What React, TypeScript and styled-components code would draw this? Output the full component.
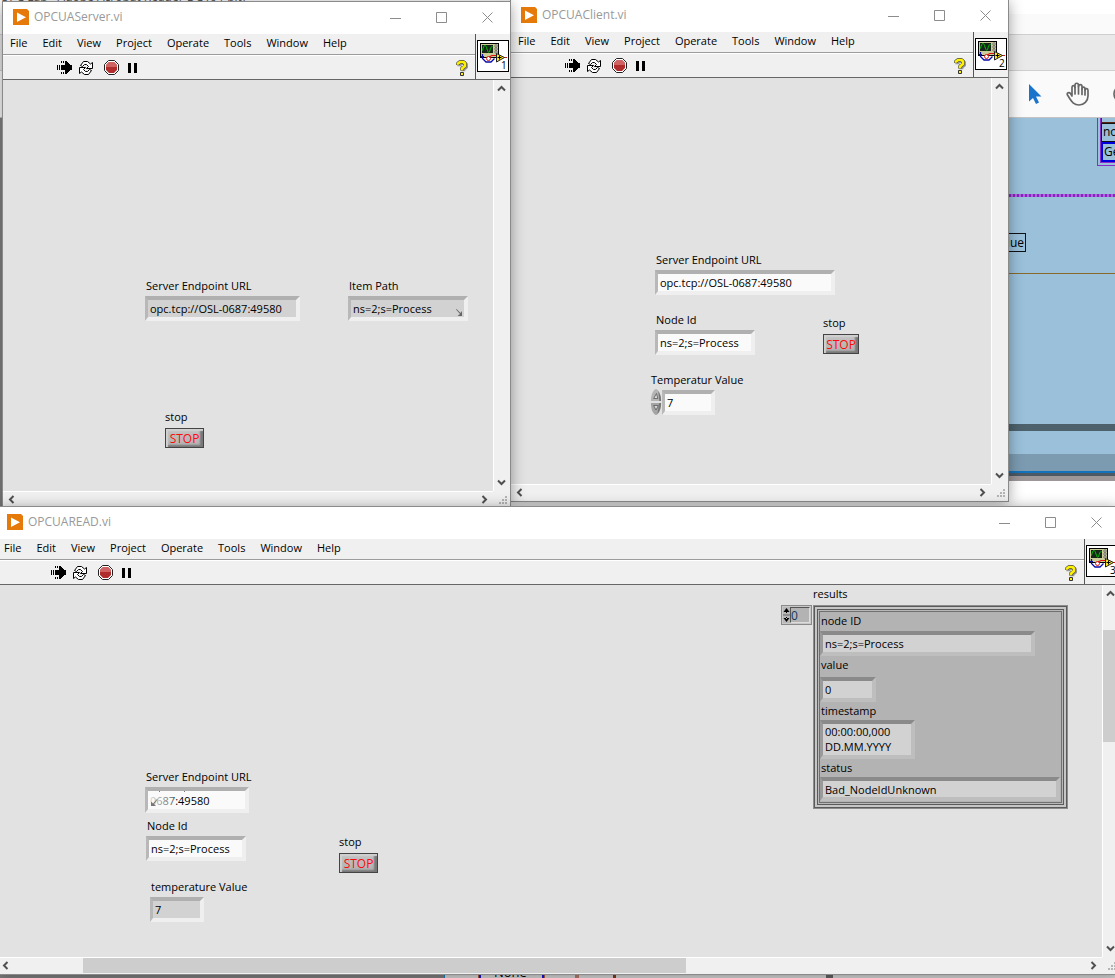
import React from "react";
import styled, { createGlobalStyle } from "styled-components";

const GlobalStyle = createGlobalStyle`
  *, *::before, *::after { box-sizing: border-box; }
  body { margin: 0; background: #808080; }
  body, button, input, textarea {
    font-family: "Open Sans", "Noto Sans", sans-serif;
    font-size: 11px;
    color: #000;
  }
  button { margin: 0; padding: 0; border: 0; background: none; }
  svg { display: block; flex: none; }
`;

/* ---------- desktop and the applications behind ---------- */

const Desktop = styled.main`
  position: relative;
  display: flex;
  flex-direction: column;
  min-height: 100vh;
  overflow: hidden;
`;

const Strip = styled.div<{ $height: number; $color: string; $line?: string }>`
  flex: none;
  height: ${(p) => p.$height}px;
  background: ${(p) => p.$color};
  border-bottom: ${(p) => (p.$line ? `1px solid ${p.$line}` : "0")};
`;

const ReaderTitle = styled(Strip)`
  line-height: 14px;
  color: #555;
  font-size: 12px;
  white-space: nowrap;
  & > span { display: block; margin-top: -10px; }
`;

const ReaderTools = styled(Strip)`
  display: flex;
  align-items: center;
  gap: 24px;
  padding-left: 1028px;
`;

const ReaderBody = styled.div`
  flex: 1;
  display: flex;
`;

const ReaderMargin = styled.div`
  flex: 0 0 444px;
  background: #828282;
`;

const Page = styled.div`
  flex: 1;
  min-width: 0;
  display: flex;
  flex-direction: column;
  background: #fff;
  border-left: 1px solid #1c86c0;
`;

const Diagram = styled.div`
  position: relative;
  height: 306px;
  overflow: hidden;
  background: #9ac0da;
`;

const Wire = styled.div<{ $top: number; $color: string; $height: number }>`
  position: absolute;
  left: 0;
  right: 0;
  top: ${(p) => p.$top}px;
  height: ${(p) => p.$height}px;
  background: ${(p) => p.$color};
`;

const ValueTag = styled.div`
  position: absolute;
  left: 529px;
  top: 115px;
  width: 52px;
  height: 19px;
  border: 1px solid #111;
  font-size: 12px;
  line-height: 17px;
  text-align: right;
  padding-right: 1px;
`;

const NodeBox = styled.div`
  position: absolute;
  left: 652px;
  top: -12px;
  width: 90px;
  height: 60px;
  border: 4px double #8a2cc8;
  background: #9ac0da;
`;

const NodeRow = styled.div<{ $edge: string; $height: number; $thick?: boolean }>`
  height: ${(p) => p.$height}px;
  border: ${(p) => (p.$thick ? 2 : 1)}px solid ${(p) => p.$edge};
  padding-left: 1px;
  font-size: 12px;
  line-height: ${(p) => p.$height - 4}px;
`;

const PageBottom = styled.div`
  flex: 1;
  display: flex;
  align-items: flex-end;
  padding-left: 34px;
  background: #dcdcdc;
`;

const EnumBox = styled.div`
  width: 65px;
  height: 15px;
  border: 2px solid #1414e0;
  border-width: 0 2px;
  outline: 1px solid #b0603c;
  padding-left: 13px;
  font-size: 13px;
  line-height: 19px;
`;

const Post = styled.div<{ $gap: number; $width: number; $color: string }>`
  width: ${(p) => p.$width}px;
  height: 8px;
  margin-left: ${(p) => p.$gap}px;
  background: ${(p) => p.$color};
`;

/* ---------- window frame ---------- */

const Frame = styled.section<{ $area: string }>`
  position: absolute;
  ${(p) => p.$area}
  display: flex;
  flex-direction: column;
  outline: 1px solid #8a8a8a;
  background: #f0f0f0;
  box-shadow: 0 2px 14px rgba(0, 0, 0, 0.42);
`;

const TitleBar = styled.header`
  flex: none;
  display: flex;
  align-items: center;
  height: 32px;
  padding: 0 0 2px 10px;
  background: #fff;
`;

const Title = styled.h1`
  flex: 1;
  margin: 0 0 0 5px;
  font-size: 12px;
  font-weight: 400;
  line-height: 16px;
  color: #999;
`;

const CaptionButton = styled.button`
  display: flex;
  align-items: center;
  justify-content: center;
  width: 46px;
  height: 30px;
`;

const Head = styled.div`
  flex: none;
  display: flex;
  height: 46px;
  border-bottom: 1px solid #666;
`;

const Bars = styled.div`
  flex: 1;
  min-width: 0;
`;

const MenuBar = styled.nav`
  display: flex;
  gap: 1px;
  height: 21px;
  border-bottom: 1px solid #9c9c9c;
`;

const MenuButton = styled.button`
  padding: 0 7px;
  line-height: 18px;
  height: 18px;
`;

const ToolBar = styled.div`
  display: flex;
  align-items: center;
  height: 24px;
  padding: 0 7px 0 54px;
  border-top: 1px solid #fff;
`;

const ToolButton = styled.button<{ $gap?: number }>`
  margin-left: ${(p) => p.$gap ?? 0}px;
`;

const HelpButton = styled.button`
  margin-left: auto;
`;

const IconPane = styled.div`
  flex: 0 0 35px;
  border-left: 1px solid #555;
  padding: 6px 1px 0;
`;

const Workspace = styled.div`
  flex: 1;
  min-height: 0;
  display: grid;
  grid-template-columns: minmax(0, 1fr) 17px;
  grid-template-rows: minmax(0, 1fr) 17px;
`;

const Canvas = styled.div`
  position: relative;
  overflow: hidden;
  background: #e2e2e2;
`;

const ScrollButton = styled.button`
  display: flex;
  align-items: center;
  justify-content: center;
`;

const ScrollBar = styled.div<{ $vertical?: boolean }>`
  position: relative;
  display: flex;
  flex-direction: ${(p) => (p.$vertical ? "column" : "row")};
  justify-content: space-between;
  background: #f0f0f0;
  border: 0 solid #fff;
  border-width: ${(p) => (p.$vertical ? "0 0 0 1px" : "1px 0 0 0")};
  ${ScrollButton} {
    width: ${(p) => (p.$vertical ? 15 : 17)}px;
    height: ${(p) => (p.$vertical ? 17 : 15)}px;
  }
`;

const HThumb = styled.div`
  position: absolute;
  left: 86px;
  top: 0;
  bottom: 1px;
  width: 603px;
  background: #cdcdcd;
`;

const VThumb = styled.div`
  position: absolute;
  left: 0;
  right: 0;
  top: 45px;
  height: 30%;
  background: #cdcdcd;
`;

const Grip = styled.div`
  display: flex;
  align-items: flex-end;
  justify-content: flex-end;
  padding: 0 3px 3px 0;
`;

/* ---------- front panel controls ---------- */

const Control = styled.div<{ $x: number; $y: number }>`
  position: absolute;
  left: ${(p) => p.$x}px;
  top: ${(p) => p.$y}px;
`;

const Caption = styled.label<{ $indent?: number }>`
  display: block;
  padding-left: ${(p) => p.$indent ?? 1}px;
  line-height: 18px;
  white-space: nowrap;
`;

type BoxProps = { $width: number; $height?: number; $fill?: string; $dark?: boolean; $gap?: number };

const bevel = (p: BoxProps) => `
  display: block;
  width: ${p.$width}px;
  height: ${p.$height ?? 25}px;
  margin: ${p.$gap ?? 1}px 0 0;
  padding: 0 2px;
  border: 4px solid;
  border-width: 4px 4px 4px 3px;
  border-color: ${p.$dark ? "#8a8a8a #bebebe #bebebe #9a9a9a" : "#b0b0b0 #efefef #efefef #b8b8b8"};
  border-radius: 0;
  background: ${p.$fill ?? "#d2d2d2"};
  outline: none;
`;

const TextBox = styled.input<BoxProps>`
  ${bevel}
`;

const StampBox = styled.textarea<BoxProps>`
  ${bevel}
  line-height: 15px;
  resize: none;
  overflow: hidden;
`;

const Overlay = styled.div`
  position: relative;
  & > svg { position: absolute; }
`;

const FadedStart = styled.div`
  position: absolute;
  left: 5px;
  top: 4px;
  width: 24px;
  height: 17px;
  background: linear-gradient(90deg, rgba(250, 250, 250, 0.85), rgba(250, 250, 250, 0.35));
`;

const ItemArrow = styled.svg`
  right: 5px;
  bottom: 5px;
`;

const PathArrow = styled.svg`
  left: 6px;
  top: 4px;
`;

const Row = styled.div`
  display: flex;
  align-items: flex-start;
`;

const StopButton = styled.button<{ $width: number }>`
  display: block;
  width: ${(p) => p.$width}px;
  height: 20px;
  margin-top: 2px;
  border: 1px solid #444;
  background: linear-gradient(#c4c4c4, #b0b0b0);
  box-shadow: inset 2px 2px 1px #d0d0d0, inset -3px -2px 2px #777;
  color: #ff0a0a;
  line-height: 18px;
  font-size: 12px;
  padding-top: 1px;
`;

const Results = styled(Control)`
  display: grid;
  grid-template-columns: 32px 255px;
`;

const IndexControl = styled.div`
  display: flex;
  width: 31px;
  height: 20px;
  margin-top: 2px;
  border: 1px solid #8a8a8a;
  padding: 1px;
  background: #c8c8c8;
`;

const IndexInput = styled.input`
  flex: 1;
  min-width: 0;
  padding: 0;
  border: 1px solid #666;
  border-color: #555 #ddd #ddd #555;
  background: #b3b3b3;
  font-size: 12px;
  color: #123a60;
`;

const Cluster = styled.fieldset`
  min-width: 0;
  margin: 2px 0 0;
  height: 204px;
  padding: 7px;
  border: 0;
  background: #b3b3b3;
  box-shadow:
    inset 0 0 0 1px #8c8c8c,
    inset 0 0 0 2px #5a5a5a,
    inset 0 0 0 4px #c6c6c6,
    inset 0 0 0 5px #5a5a5a,
    inset 0 0 0 6px #b8b8b8,
    inset 0 0 0 7px #707070;
`;

const Legend = styled.div`
  grid-column: 2;
  line-height: 18px;
`;

/* ---------- drawings ---------- */

const LabviewLogo = () => (
  <svg width="16" height="16" viewBox="0 0 16 16">
    <path d="M0 0H14L16 2V16H0Z" fill="#e57a0a" />
    <path d="M4 3.500L13 8.200L4 13Z" fill="#fff" />
  </svg>
);

const RunIcon = () => (
  <svg width="15" height="15" viewBox="0 0 15 15" shapeRendering="crispEdges">
    <path d="M0 5h1v5H0zM2 5h1v5H2zM4 5h11v5H4zM4 1h1v2H4zM6 1h1v2H6zM4 12h1v2H4zM6 12h1v2H6z" />
    <path d="M8 1h1l6 6v1l-6 6H8z" />
  </svg>
);

const LoopIcon = () => (
  <svg width="16" height="14" viewBox="0 0 16 14" fill="#fff" stroke="#000" strokeWidth="1">
    <path d="M2.500 4.500L5.500 .5H9.500L12.500 3L14.500 1.500V7.500H8.500L10.500 5.500L8.500 3.500H6.500L4.500 5.500Z" />
    <path d="M13.500 9.500L10.500 13.500H6.500L3.500 11L1.500 12.500V6.500H7.500L5.500 8.500L7.500 10.500H9.500L11.500 8.500Z" />
  </svg>
);

const AbortIcon = () => (
  <svg width="15" height="15" viewBox="0 0 15 15">
    <path d="M4.500 .5H10.500L14.500 4.500V10.500L10.500 14.500H4.500L.5 10.500V4.500Z" fill="#fff" stroke="#222" />
    <path d="M5 2H10L13 5V10L10 13H5L2 10V5Z" fill="#b12c2c" />
    <path d="M5 2H10L13 5V7H2V5Z" fill="#cf6262" />
  </svg>
);

const PauseIcon = () => (
  <svg width="10" height="10" viewBox="0 0 10 10" shapeRendering="crispEdges">
    <path d="M0 0h3v10H0zM6 0h3v10H6z" />
  </svg>
);

const HelpIcon = () => (
  <svg width="12" height="16" viewBox="0 0 12 16" fill="none" strokeLinejoin="round">
    <path d="M2.500 5.500V4L4 2.500H8L9.500 4V6L6.500 8.500V10.500" stroke="#999" strokeWidth="4" transform="translate(.8 .8)" />
    <path d="M2 5V3.500L4 2H7.500L9 3.500V6L6 8.500V10.500" stroke="#444" strokeWidth="3.800" />
    <path d="M2 4.800V3.500L4 2H7.500L9 3.500V6L6 8.500V10.300" stroke="#fff200" strokeWidth="2.600" />
    <rect x="4.500" y="12.500" width="3" height="3" fill="#fff200" stroke="#333" />
  </svg>
);

const ViIcon = ({ index }: { index: number }) => (
  <svg width="32" height="32" viewBox="0 0 32 32">
    <rect x=".5" y=".5" width="31" height="31" fill="#fff" stroke="#000" />
    <rect x="3.500" y="3.500" width="18" height="14" fill="#cccc99" stroke="#000" />
    <rect x="5" y="5" width="11" height="8" fill="#16241a" />
    <path d="M5.500 10.500C7 4 8.500 4 10 9S12.500 13 13.500 8L15.500 6" fill="none" stroke="#00c800" />
    <path d="M18 5h2v2h-2zM18 8h2v2h-2zM18 11h2v2h-2z" fill="#fff" stroke="#333" strokeWidth=".6" />
    <path d="M5.500 14V18.500L9 22H14L17.500 18.500" fill="none" stroke="#0a0aa8" strokeWidth="1.300" />
    <path d="M4 16.500h3" stroke="#0a0aa8" />
    <circle cx="11.500" cy="18.500" r="2" fill="#fff" stroke="#e01010" />
    <path d="M12 17L15 15.500H19M27 17.500H30" fill="none" stroke="#e01010" strokeWidth="1.200" />
    <path d="M19.500 13.500L27.500 17.500L19.500 22Z" fill="#ffe61a" stroke="#222" />
    <path d="M20.500 17.500h4M22.500 15.500v4" stroke="#000" />
    <text x="24" y="29" fontSize="10" fontFamily="Open Sans, sans-serif">{index}</text>
  </svg>
);

const Chevron = ({ d }: { d: string }) => (
  <svg width="9" height="9" viewBox="0 0 9 9" fill="none" stroke="#505050" strokeWidth="2">
    <path d={d} />
  </svg>
);

const GripDots = () => (
  <svg width="9" height="9" viewBox="0 0 9 9" fill="#b4b4b4" shapeRendering="crispEdges">
    <path d="M7 0h2v2H7zM4 3h2v2H4zM7 3h2v2H7zM1 6h2v2H1zM4 6h2v2H4zM7 6h2v2H7z" />
  </svg>
);

const CaptionIcon = ({ d }: { d: string }) => (
  <svg width="11" height="11" viewBox="0 0 11 11" fill="none" stroke="#8c8c8c">
    <path d={d} />
  </svg>
);

const CursorIcon = () => (
  <svg width="14" height="22" viewBox="0 0 14 22" fill="#1b74cc">
    <path d="M1 1V18.500L5 15L8 21L11 19.500L8 13.500H13.500Z" />
  </svg>
);

const HandIcon = () => (
  <svg width="23" height="24" viewBox="0 0 23 24" fill="none" stroke="#666" strokeWidth="1.700" strokeLinecap="round" strokeLinejoin="round">
    <path d="M6 13V5.500C6 3 9 3 9 5.500V3.500C9 .5 12.500 .5 12.500 3.500V4.500C12.500 2 16 2 16 4.500V7C16 4.500 19 4.500 19 7V8C19.500 6 22 6 22 8.500V14C22 19 18 23 13 23C8 23 6 20 4 17L1.500 13C.5 11 3 9.500 4.500 11.500L6 14" />
    <path d="M9 5.500V12M12.500 4V12M16 7V12.500M19 8V13" />
  </svg>
);

const MagnifierIcon = () => (
  <svg width="22" height="22" viewBox="0 0 22 22" fill="none" stroke="#666" strokeWidth="1.700">
    <circle cx="9" cy="11" r="8" />
    <path d="M15 17L19 21" />
  </svg>
);

const Spinner = () => (
  <svg width="12" height="26" viewBox="0 0 13 26" preserveAspectRatio="none">
    <path d="M6.500 0C10 1 12 6 12 12H1C1 6 3 1 6.500 0Z" fill="#b4b4b4" />
    <path d="M1 14H12C12 20 10 25 6.500 26C3 25 1 20 1 14Z" fill="#a4a4a4" />
    <path d="M9 2Q12 6 12 12H10ZM10 14H12Q12 21 8 25Z" fill="#777" />
    <path d="M4 9.500L7 4.500L8.500 9.500ZM4 16.500H9L6.500 21Z" fill="#ddd" stroke="#555" strokeWidth=".8" />
  </svg>
);

const IndexSpinner = () => (
  <svg width="7" height="16" viewBox="0 0 7 16">
    <rect width="7" height="16" fill="#b8b8b8" />
    <path d="M0 8h7" stroke="#666" />
    <path d="M3.500 1L6.500 5H.5ZM3.500 15L6.500 11H.5ZM3 4h1v2H3zM3 10h1v2H3z" />
  </svg>
);

/* ---------- composition ---------- */

const MENUS = ["File", "Edit", "View", "Project", "Operate", "Tools", "Window", "Help"];

type WindowProps = {
  title: string;
  index: number;
  area: string;
  scrollable?: boolean;
  children: React.ReactNode;
};

const ViWindow = ({ title, index, area, scrollable, children }: WindowProps) => (
  <Frame $area={area} aria-label={title}>
    <TitleBar>
      <LabviewLogo />
      <Title>{title}</Title>
      <CaptionButton aria-label="Minimize"><CaptionIcon d="M0 6.500H11" /></CaptionButton>
      <CaptionButton aria-label="Maximize"><CaptionIcon d="M.5 .5H10.500V10.500H.5Z" /></CaptionButton>
      <CaptionButton aria-label="Close"><CaptionIcon d="M.5 .5L10.500 10.500M10.500 .5L.5 10.500" /></CaptionButton>
    </TitleBar>
    <Head>
      <Bars>
        <MenuBar>
          {MENUS.map((m) => <MenuButton key={m}>{m}</MenuButton>)}
        </MenuBar>
        <ToolBar>
          <ToolButton aria-label="Run"><RunIcon /></ToolButton>
          <ToolButton aria-label="Run continuously" $gap={6}><LoopIcon /></ToolButton>
          <ToolButton aria-label="Abort" $gap={10}><AbortIcon /></ToolButton>
          <ToolButton aria-label="Pause" $gap={9}><PauseIcon /></ToolButton>
          <HelpButton aria-label="Context help"><HelpIcon /></HelpButton>
        </ToolBar>
      </Bars>
      <IconPane><ViIcon index={index} /></IconPane>
    </Head>
    <Workspace>
      <Canvas>{children}</Canvas>
      <ScrollBar $vertical>
        {scrollable && <VThumb />}
        <ScrollButton aria-label="Scroll up"><Chevron d="M1 6.500L4.500 3L8 6.500" /></ScrollButton>
        <ScrollButton aria-label="Scroll down"><Chevron d="M1 2.500L4.500 6L8 2.500" /></ScrollButton>
      </ScrollBar>
      <ScrollBar>
        {scrollable && <HThumb />}
        <ScrollButton aria-label="Scroll left"><Chevron d="M6.500 1L3 4.500L6.500 8" /></ScrollButton>
        <ScrollButton aria-label="Scroll right"><Chevron d="M2.500 1L6 4.500L2.500 8" /></ScrollButton>
      </ScrollBar>
      <Grip><GripDots /></Grip>
    </Workspace>
  </Frame>
);

type FieldProps = {
  id: string;
  label: string;
  value: string;
  width: number;
  height?: number;
  fill?: string;
  dark?: boolean;
  gap?: number;
  readOnly?: boolean;
};

const WHITE = "#fafafa";

const Field = ({ id, label, value, width, height, fill, dark, gap, readOnly }: FieldProps) => (
  <>
    <Caption htmlFor={id}>{label}</Caption>
    <TextBox id={id} defaultValue={value} readOnly={readOnly} $width={width} $height={height} $fill={fill} $dark={dark} $gap={gap} />
  </>
);

const Stop = ({ id, x, y, width }: { id: string; x: number; y: number; width: number }) => (
  <Control $x={x} $y={y}>
    <Caption htmlFor={id} $indent={0}>stop</Caption>
    <StopButton id={id} $width={width}>STOP</StopButton>
  </Control>
);

export default function App() {
  return (
    <Desktop>
      <GlobalStyle />
      <ReaderTitle $height={14} $color="#fff"><span>OPC Lab - Adobe Acrobat Reader DC (64-bit)</span></ReaderTitle>
      <Strip $height={21} $color="#fafafa" $line="#cfcfcf" />
      <Strip $height={36} $color="#e9e9e9" $line="#cfcfcf" />
      <ReaderTools $height={47} $color="#fafafa" $line="#c4c4c4">
        <CursorIcon />
        <HandIcon />
        <MagnifierIcon />
      </ReaderTools>
      <ReaderBody>
        <ReaderMargin />
        <Page>
          <Diagram>
            <Wire $top={76} $height={3} $color="repeating-linear-gradient(90deg, #8f1fc8 0 2px, #a869d4 2px 4px)" />
            <Wire $top={155} $height={1} $color="#8a6a2a" />
            <ValueTag>Value</ValueTag>
            <NodeBox>
              <NodeRow $edge="#5a2410" $height={13} />
              <NodeRow $edge="#111" $height={19}>node</NodeRow>
              <NodeRow $edge="#0000dd" $height={20} $thick>Get</NodeRow>
            </NodeBox>
          </Diagram>
          <Strip $height={7} $color="#4d626c" />
          <Strip $height={23} $color="#9ac0da" />
          <Strip $height={17} $color="#7c9bb0" />
          <Strip $height={2} $color="#1272bc" />
          <Strip $height={3} $color="#4d5a64" />
          <Strip $height={5} $color="#9c9698" />
          <Strip $height={200} $color="#fff" />
          <PageBottom>
            <EnumBox>None</EnumBox>
            <Post $gap={31} $width={4} $color="#b98070" />
            <Post $gap={34} $width={3} $color="#8a3c18" />
            <Post $gap={210} $width={7} $color="#666" />
          </PageBottom>
        </Page>
      </ReaderBody>

      <ViWindow title="OPCUAClient.vi" index={2} area="left: 511px; top: 0; width: 497px; height: 501px;">
        <Control $x={144} $y={173}>
          <Field id="client-url" label="Server Endpoint URL" value="opc.tcp://OSL-0687:49580" width={180} fill={WHITE} />
        </Control>
        <Control $x={144} $y={233}>
          <Field id="client-node" label="Node Id" value="ns=2;s=Process" width={100} fill={WHITE} />
        </Control>
        <Control $x={139} $y={293}>
          <Caption htmlFor="client-temp">Temperatur Value</Caption>
          <Row>
            <Spinner />
            <TextBox id="client-temp" defaultValue="7" $width={53} $fill={WHITE} />
          </Row>
        </Control>
        <Stop id="client-stop" x={312} y={236} width={36} />
      </ViWindow>

      <ViWindow title="OPCUAServer.vi" index={1} area="left: 3px; top: 2px; width: 507px; height: 506px;">
        <Control $x={142} $y={197}>
          <Field id="server-url" label="Server Endpoint URL" value="opc.tcp://OSL-0687:49580" width={155} readOnly />
        </Control>
        <Control $x={345} $y={197}>
          <Overlay>
            <Field id="server-item" label="Item Path" value="ns=2;s=Process" width={120} readOnly />
            <ItemArrow width="7" height="7" viewBox="0 0 7 7" fill="#666">
              <path d="M0 .5L.5 0L4.500 4L6 2V7H1.500L4 5Z" />
            </ItemArrow>
          </Overlay>
        </Control>
        <Stop id="server-stop" x={162} y={328} width={39} />
      </ViWindow>

      <ViWindow title="OPCUAREAD.vi" index={3} scrollable area="left: -3px; right: -4px; top: 507px; bottom: 4px;">
        <Control $x={148} $y={183}>
          <Caption htmlFor="read-url">Server Endpoint URL</Caption>
          <Overlay>
            <TextBox id="read-url" defaultValue="0687:49580" $width={104} $height={26} $fill={WHITE} />
            <FadedStart />
            <PathArrow width="36" height="20" viewBox="0 0 36 20" fill="#777">
              <path d="M6 8L6.500 8.500L3 13L5 15H0V10.500L2 12.500Z" />
              <path d="M8 0h1v1H8zM33 0h1v1h-1z" />
            </PathArrow>
          </Overlay>
        </Control>
        <Control $x={149} $y={232}>
          <Field id="read-node" label="Node Id" value="ns=2;s=Process" width={100} fill={WHITE} />
        </Control>
        <Control $x={153} $y={293}>
          <Field id="read-temp" label="temperature Value" value="7" width={54} readOnly />
        </Control>
        <Stop id="read-stop" x={342} y={248} width={39} />
        <Results $x={784} $y={0}>
          <Legend>results</Legend>
          <IndexControl>
            <IndexSpinner />
            <IndexInput aria-label="results index" defaultValue="0" />
          </IndexControl>
          <Cluster aria-label="results">
            <Field id="res-node" label="node ID" value="ns=2;s=Process" width={215} dark readOnly />
            <Field id="res-value" label="value" value="0" width={56} gap={3} dark readOnly />
            <Caption htmlFor="res-time">timestamp</Caption>
            <StampBox id="res-time" defaultValue={"00:00:00,000\nDD.MM.YYYY"} readOnly $width={95} $height={39} $dark $gap={0} />
            <Field id="res-status" label="status" value="Bad_NodeIdUnknown" width={240} height={24} gap={0} dark readOnly />
          </Cluster>
        </Results>
      </ViWindow>
    </Desktop>
  );
}
